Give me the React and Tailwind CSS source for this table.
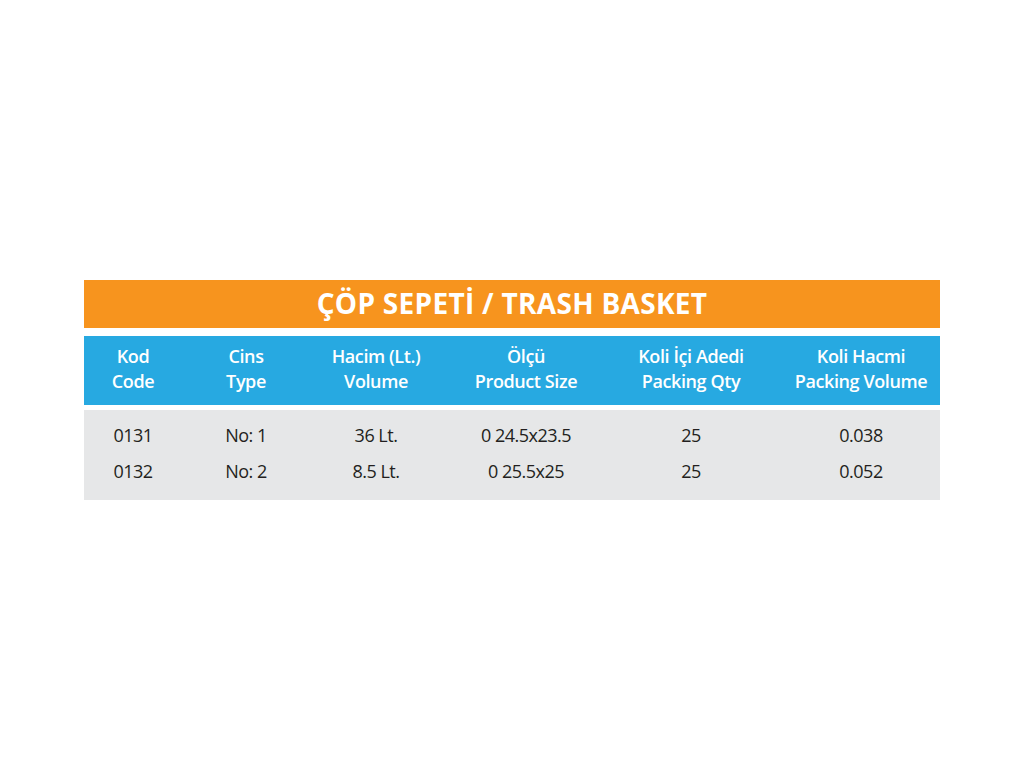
const headers = [
  ["Kod", "Code"],
  ["Cins", "Type"],
  ["Hacim (Lt.)", "Volume"],
  ["Ölçü", "Product Size"],
  ["Koli İçi Adedi", "Packing Qty"],
  ["Koli Hacmi", "Packing Volume"],
];

const rows = [
  ["0131", "No: 1", "36 Lt.", "0 24.5x23.5", "25", "0.038"],
  ["0132", "No: 2", "8.5 Lt.", "0 25.5x25", "25", "0.052"],
];

// last column is nudged right a little, like in the printed sheet
const cols = "grid grid-cols-[98px_128px_132px_168px_162px_168px] [&>*:last-child]:pl-[10px]";

export default function App() {
  return (
    <div className="min-h-[768px] bg-white pt-[280px] font-['Open_Sans',sans-serif]">
      <div className="ml-[84px] w-[856px]">
        <div className="flex h-[48px] items-center justify-center bg-[#f7941e] pb-[3px] text-[28px] font-bold tracking-[0.3px] text-white">
          ÇÖP SEPETİ / TRASH BASKET
        </div>
        <div className={`${cols} mt-[8px] h-[69px] content-center bg-[#27a9e1] pb-[4px] text-white`}>
          {headers.map(([tr, en]) => (
            <div key={en} className="text-center text-[18px] font-semibold leading-[25px] tracking-[-0.4px]">
              <div>{tr}</div>
              <div>{en}</div>
            </div>
          ))}
        </div>
        <div className="mt-[5px] flex h-[90px] flex-col justify-center gap-[11px] bg-[#e6e7e8] pb-[4px] text-[#231f20]">
          {rows.map((row) => (
            <div key={row[0]} className={`${cols} text-[18px] leading-[25px] tracking-[-0.5px]`}>
              {row.map((cell, i) => (
                <div key={i} className="text-center">
                  {cell}
                </div>
              ))}
            </div>
          ))}
        </div>
      </div>
    </div>
  );
}
